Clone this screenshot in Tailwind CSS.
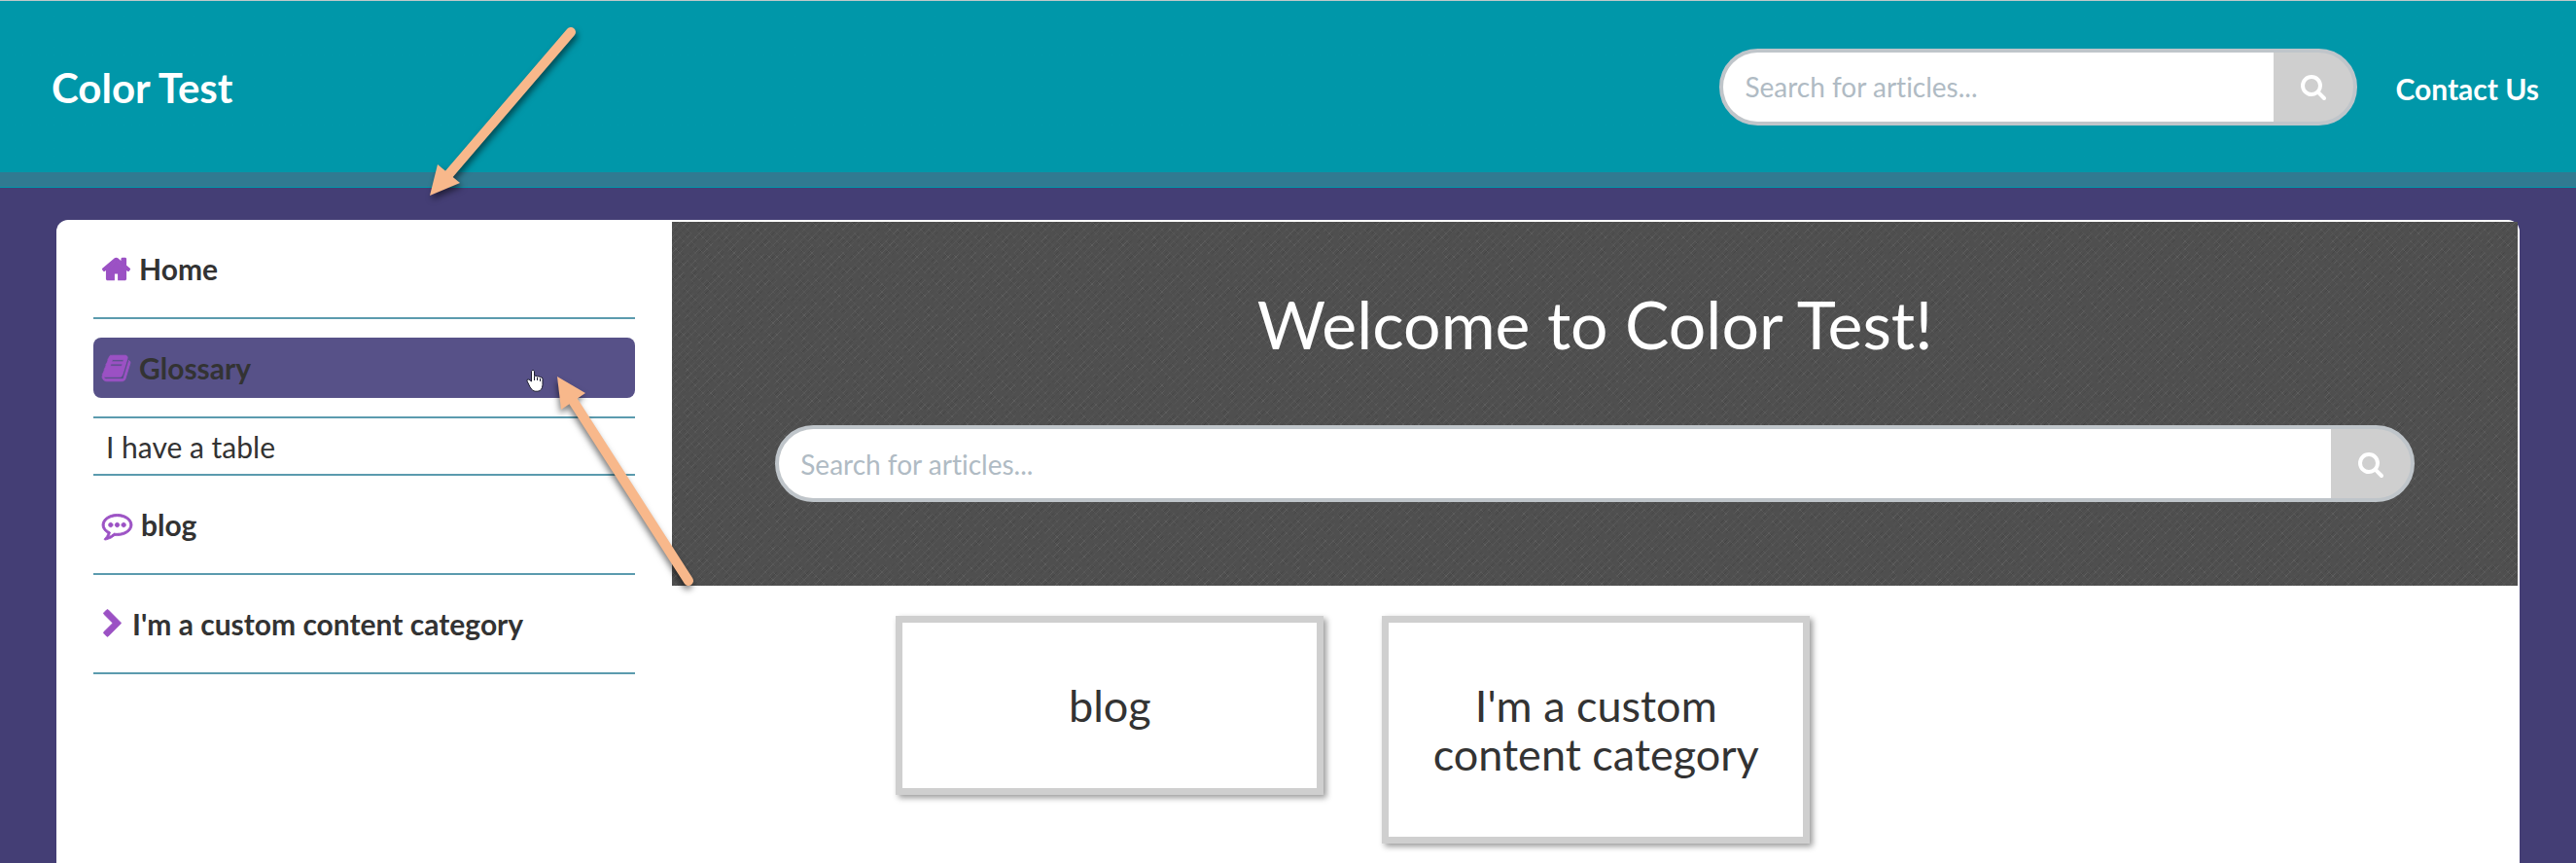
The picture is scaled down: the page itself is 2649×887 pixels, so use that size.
<!DOCTYPE html>
<html lang="en">
<head>
    <meta charset="UTF-8">
    <meta name="viewport" content="width=device-width, initial-scale=1.0">
    <title>Color Test</title>
    <script src="https://cdn.jsdelivr.net/npm/@tailwindcss/browser@4"></script>
</head>
<body class="relative flex min-h-screen flex-col overflow-x-hidden bg-[#443e75] font-['Lato',sans-serif] text-[30px] text-[#333333] [font-variant-ligatures:none]">
    <svg class="hidden">
        <symbol id="icon-search" viewBox="64 0 1664 1792"><path d="M1216 832q0-185-131.5-316.5t-316.5-131.5-316.5 131.5-131.5 316.5 131.5 316.5 316.5 131.5 316.5-131.5 131.5-316.5zm512 832q0 52-38 90t-90 38q-54 0-90-38l-343-342q-179 124-399 124-143 0-273.5-55.5t-225-150-150-225-55.5-273.5 55.5-273.5 150-225 225-150 273.5-55.5 273.5 55.5 225 150 150 225 55.5 273.5q0 220-124 399l343 343q37 37 37 90z"/></symbol>
    </svg>

    <!-- Top bar -->
    <header class="flex h-[193px] items-center justify-between border-t border-b border-t-[#bfc8ca] border-b-[#0097a9] bg-linear-to-t from-[#307a91] from-[15px] to-[#0097a9] to-[15px] pr-[38px] pb-[15px] pl-[53px]">
        <a href="#" class="pt-[2px] text-[42px] leading-none font-bold text-white">Color Test</a>
        <div class="flex items-center gap-[39px]">
            <form class="flex h-[79px] w-[656px] overflow-hidden rounded-full border-4 border-[#bfc5ca] bg-[#cfcfcf]">
                <input type="search" aria-label="Search for articles" placeholder="Search for articles..." class="min-w-0 flex-1 bg-white pl-[22px] text-[28px] outline-none placeholder:text-[#b0bbc4]">
                <button type="button" aria-label="Search" class="flex w-[82px] items-center justify-center"><svg class="h-[28px] w-[26px] fill-white"><use href="#icon-search"/></svg></button>
            </form>
            <a href="#" class="pt-[4px] text-[30px] font-bold text-white">Contact Us</a>
        </div>
    </header>

    <div class="mx-[58px] mt-[33px] flex flex-1 rounded-t-[12px] bg-white">
        <!-- Sidebar -->
        <nav class="w-1/4 px-[38px]">
            <ul>
                <li class="border-b-2 border-[#5b9bae] py-[19px]">
                    <a href="#" class="flex h-[62px] items-center gap-[9px] rounded-[8px] px-[9px] font-bold">
                        <svg class="h-[31px] w-[29px] overflow-visible fill-[#9b51c4] stroke-[#9b51c4] stroke-[70px]" viewBox="64 0 1664 1792"><path d="M1472 992v480q0 26-19 45t-45 19h-384v-384h-256v384h-384q-26 0-45-19t-19-45v-480q0-1 .5-3t.5-3l575-474 575 474q1 2 1 6zm223-69l-62 74q-8 9-21 11h-3q-13 0-21-7l-692-577-692 577q-12 8-24 7-13-2-21-11l-62-74q-8-10-7-23.5t11-21.5l719-599q32-26 76-26t76 26l244 204v-195q0-14 9-23t23-9h192q14 0 23 9t9 23v408l219 182q10 8 11 21.5t-7 23.5z"/></svg>
                        Home
                    </a>
                </li>
                <li class="border-b-2 border-[#5b9bae] py-[19px]">
                    <a href="#" class="flex h-[62px] items-center gap-[9px] rounded-[8px] bg-[#575188] px-[9px] font-bold">
                        <svg class="h-[31px] w-[29px] overflow-visible fill-[#9b51c4] stroke-[#9b51c4] stroke-[50px]" viewBox="64 0 1664 1792"><path d="M1703 478q40 57 18 129l-275 906q-19 64-76.5 107.5t-122.5 43.5h-923q-77 0-148.5-53.5t-99.5-131.5q-24-67-2-127 0-4 3-27t4-37q1-8-3-21.5t-3-19.5q2-11 8-21t16.5-23.5 16.5-23.5q23-38 45-91.5t30-91.5q3-10 .5-30t-.5-28q3-11 17-28t17-23q21-36 42-92t25-90q1-9-2.5-32t.5-28q4-13 22-30.5t22-22.5q19-26 42.5-84.5t27.5-96.5q1-8-3-25.5t-2-26.5q2-8 9-18t18-23 17-21q8-12 16.5-30.5t15-35 16-36 19.5-32 26.5-23.5 36-11.5 47.5 5.5l-1 3q38-9 51-9h761q74 0 114 56t18 130l-274 906q-36 119-71.5 153.5t-128.5 34.5h-869q-27 0-38 15-11 16-1 43 24 70 144 70h923q29 0 56-15.5t35-41.5l300-987q7-22 5-57 38 15 59 43zm-1064 2q-4 13 2 22.5t20 9.5h608q13 0 25.5-9.5t16.5-22.5l21-64q4-13-2-22.5t-20-9.5h-608q-13 0-25.5 9.5t-16.5 22.5zm-83 256q-4 13 2 22.5t20 9.5h608q13 0 25.5-9.5t16.5-22.5l21-64q4-13-2-22.5t-20-9.5h-608q-13 0-25.5 9.5t-16.5 22.5z"/></svg>
                        Glossary
                    </a>
                </li>
                <li class="flex h-[59px] items-center border-b-2 border-[#5b9bae] pt-[2px] pl-[13px]">
                    <a href="#">I have a table</a>
                </li>
                <li class="border-b-2 border-[#5b9bae] py-[19px]">
                    <a href="#" class="flex h-[62px] items-center gap-[9px] rounded-[8px] px-[9px] font-bold">
                        <svg class="h-[31px] w-[31px] overflow-visible fill-[#9b51c4] stroke-[#9b51c4] stroke-[50px]" viewBox="0 0 1792 1792"><path d="M640 896q0 53-37.5 90.5t-90.5 37.5-90.5-37.5-37.5-90.5 37.5-90.5 90.5-37.5 90.5 37.5 37.5 90.5zm384 0q0 53-37.5 90.5t-90.5 37.5-90.5-37.5-37.5-90.5 37.5-90.5 90.5-37.5 90.5 37.5 37.5 90.5zm384 0q0 53-37.5 90.5t-90.5 37.5-90.5-37.5-37.5-90.5 37.5-90.5 90.5-37.5 90.5 37.5 37.5 90.5zm-512-512q-204 0-381.5 69.5t-282 187.5-104.5 255q0 112 71.5 213.5t201.5 175.5l87 50-27 96q-24 91-70 172 152-63 275-171l43-38 57 6q69 8 130 8 204 0 381.5-69.5t282-187.5 104.5-255-104.5-255-282-187.5-381.5-69.5zm896 512q0 174-120 321.5t-326 233-450 85.5q-70 0-145-8-198 175-460 242-49 14-114 22h-5q-15 0-27-10.5t-16-27.5v-1q-3-4-.5-12t2-10 4.5-9.5l6-9 7-8.5 8-9q7-8 31-34.5t34.5-38 31-39.5 32.5-51 27-59 26-76q-157-89-247.5-220t-90.5-281q0-174 120-321.5t326-233 450-85.5 450 85.5 326 233 120 321.5z"/></svg>
                        blog
                    </a>
                </li>
                <li class="border-b-2 border-[#5b9bae] py-[19px]">
                    <a href="#" class="flex h-[62px] items-center gap-[9px] rounded-[8px] px-[9px] font-bold">
                        <svg class="h-[31px] w-[22px] overflow-visible fill-[#9b51c4] stroke-[#9b51c4] stroke-[50px]" viewBox="256 0 1280 1792"><path d="M1363 877l-742 742q-19 19-45 19t-45-19l-166-166q-19-19-19-45t19-45l531-531-531-531q-19-19-19-45t19-45l166-166q19-19 45-19t45 19l742 742q19 19 19 45t-19 45z"/></svg>
                        I'm a custom content category
                    </a>
                </li>
            </ul>
        </nav>

        <main class="w-3/4 pt-[2px] pr-[2px]">
            <!-- Hero -->
            <section class="relative flex h-[374px] flex-col items-center bg-[#4e4e4e] px-[106px] pt-[64px]">
                <svg class="absolute inset-0 h-full w-full" aria-hidden="true">
                    <defs>
                        <pattern id="weave" width="8" height="8" patternUnits="userSpaceOnUse">
                            <path d="M0 8L8 0" stroke="#666666" stroke-width="1" opacity=".7"/>
                            <path d="M0 0L8 8" stroke="#606060" stroke-width="1" opacity=".7"/>
                            <path d="M0 4L4 0M4 8L8 4" stroke="#404040" stroke-width="1" opacity=".7"/>
                        </pattern>
                        <filter id="grain" x="0" y="0" width="100%" height="100%" color-interpolation-filters="sRGB">
                            <feTurbulence type="fractalNoise" baseFrequency=".15" numOctaves="2" seed="4"/>
                            <feColorMatrix values="0 0 0 0 .31  0 0 0 0 .31  0 0 0 0 .31  2.4 0 0 0 -.6"/>
                        </filter>
                    </defs>
                    <rect width="100%" height="100%" fill="url(#weave)"/>
                    <rect width="100%" height="100%" filter="url(#grain)"/>
                </svg>
                <h1 class="relative text-[68px] leading-[82px] text-white">Welcome to Color Test!</h1>
                <form class="relative mt-[63px] flex h-[79px] w-full overflow-hidden rounded-full border-4 border-[#bfc5ca] bg-[#cfcfcf]">
                    <input type="search" aria-label="Search for articles" placeholder="Search for articles..." class="min-w-0 flex-1 bg-white pl-[22px] text-[28px] outline-none placeholder:text-[#b0bbc4]">
                    <button type="button" aria-label="Search" class="flex w-[82px] items-center justify-center"><svg class="h-[28px] w-[26px] fill-white"><use href="#icon-search"/></svg></button>
                </form>
            </section>

            <!-- Category panels -->
            <section class="flex items-start gap-[60px] pt-[31px] pl-[230px] text-center text-[45px] leading-[50px]">
                <a href="#" class="w-[440px] border-[7px] border-[#cfcfcf] px-[40px] py-[60px] shadow-[3px_3px_6px_rgba(0,0,0,0.4)]">blog</a>
                <a href="#" class="w-[440px] border-[7px] border-[#cfcfcf] px-[40px] py-[60px] shadow-[3px_3px_6px_rgba(0,0,0,0.4)]">I'm a custom content category</a>
            </section>
        </main>
    </div>

    <!-- Callout arrows and pointer -->
    <svg class="pointer-events-none absolute top-0 left-0 h-[640px] w-[760px]" viewBox="0 0 760 640" aria-hidden="true">
        <g class="drop-shadow-[2px_4px_3px_rgba(0,0,0,0.5)]" fill="#f8b88b" stroke="#f8b88b">
            <path d="M587 33L460 181" stroke-width="10" stroke-linecap="round"/>
            <path d="M442 201L450 169L473 188Z" stroke="none"/>
        </g>
        <g class="drop-shadow-[-1px_4px_3px_rgba(0,0,0,0.5)]" fill="#f8b88b" stroke="#f8b88b">
            <path d="M708 597L588 410" stroke-width="10" stroke-linecap="round"/>
            <path d="M573 387L602 404L577 421Z" stroke="none"/>
        </g>
        <!-- Hand pointer -->
        <path d="M546.5 392v-10.500q1.500-2.500 3 0v5q1.500-1 3 .5 1.500-.8 3 .7 2-.5 2.500 1.500v6.500q-.5 6-5 6.500h-3q-3-.5-5-4.500l-3-6q-.3-2.500 2-1.700z" fill="#ffffff" stroke="#1c1c30"/>
        <path d="M549.5 387v4M552.5 388v3M555.5 389v3" stroke="#1c1c30" fill="none"/>
    </svg>
</body>
</html>
